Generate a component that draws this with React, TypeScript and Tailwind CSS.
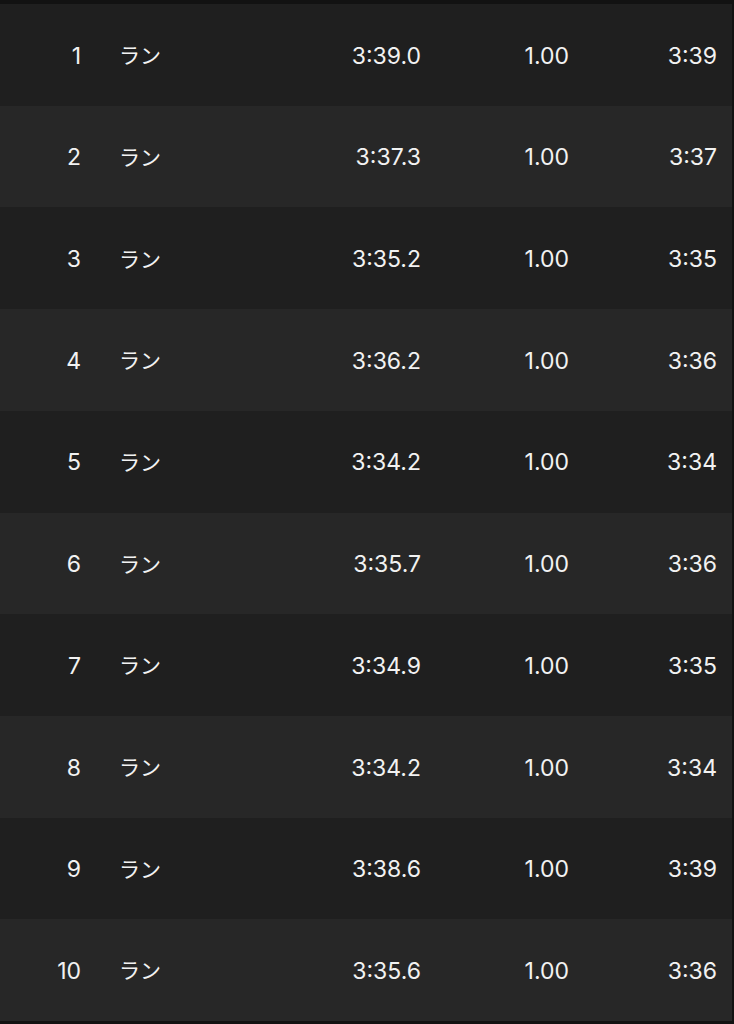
const laps = [
  { no: 1, time: "3:39.0", dist: "1.00", pace: "3:39" },
  { no: 2, time: "3:37.3", dist: "1.00", pace: "3:37" },
  { no: 3, time: "3:35.2", dist: "1.00", pace: "3:35" },
  { no: 4, time: "3:36.2", dist: "1.00", pace: "3:36" },
  { no: 5, time: "3:34.2", dist: "1.00", pace: "3:34" },
  { no: 6, time: "3:35.7", dist: "1.00", pace: "3:36" },
  { no: 7, time: "3:34.9", dist: "1.00", pace: "3:35" },
  { no: 8, time: "3:34.2", dist: "1.00", pace: "3:34" },
  { no: 9, time: "3:38.6", dist: "1.00", pace: "3:39" },
  { no: 10, time: "3:35.6", dist: "1.00", pace: "3:36" },
]

export default function App() {
  return (
    <div
      className="h-[1024px] w-[734px] bg-[#121212] pt-1 pb-[3px] pr-[2px] flex flex-col text-[#f2f2f2] text-[23px]"
      style={{ fontFamily: 'Inter, "Noto Sans CJK JP", sans-serif' }}
    >
      {laps.map((lap, i) => (
        <div
          key={lap.no}
          className={
            "flex-1 flex items-center pt-[2px] " +
            (i % 2 === 0 ? "bg-[#1f1f1f]" : "bg-[#272727]")
          }
        >
          <div className="w-[81px] text-right">{lap.no}</div>
          <div className="ml-[38px] w-[101px] text-[21px]">ラン</div>
          <div className="w-[201px] text-right">{lap.time}</div>
          <div className="w-[148px] text-right">{lap.dist}</div>
          <div className="w-[148px] text-right">{lap.pace}</div>
        </div>
      ))}
    </div>
  )
}
